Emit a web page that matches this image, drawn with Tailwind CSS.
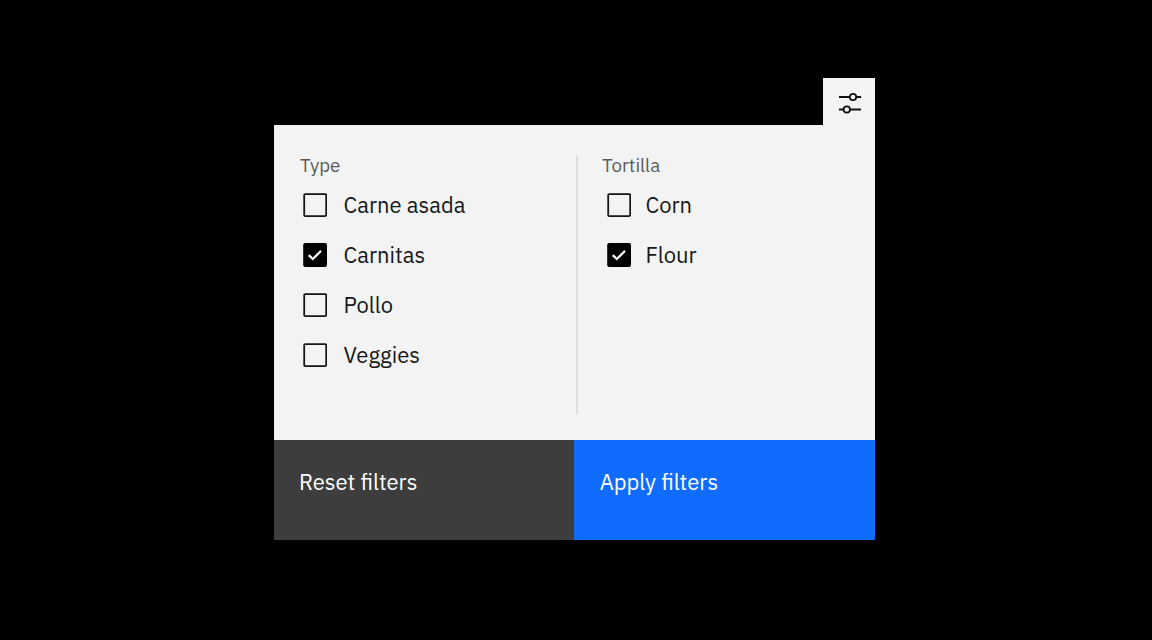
<!DOCTYPE html>
<html lang="en">
<head>
<meta charset="utf-8">
<title>Filters</title>
<script src="https://cdn.jsdelivr.net/npm/@tailwindcss/browser@4"></script>
</head>
<body class="h-screen overflow-hidden bg-black pt-[78px] pl-[274px] font-['IBM_Plex_Sans','Open_Sans',sans-serif] text-[22px] text-[#161616]">
<svg class="hidden">
  <symbol id="box" viewBox="0 0 24 24"><rect x="1.2" y="1.1" width="22" height="22" rx="1" fill="none" stroke="#161616" stroke-width="1.8"/></symbol>
  <symbol id="checked" viewBox="0 0 24 24"><rect x=".2" y=".1" width="23.8" height="23.8" rx="1.8" fill="#000"/><path d="M5.8 12.1l4 3.9 8.2-8.1" fill="none" stroke="#fff" stroke-width="2.2"/></symbol>
</svg>
<main class="flex w-[601px] flex-col">
  <button class="flex h-[47px] w-[52px] items-center justify-center self-end bg-[#f3f3f3] pt-[3px] pl-[2px]" aria-label="Filter settings">
    <svg class="h-[24px] w-[24px]" viewBox="0 0 24 24" fill="none" stroke="#111" stroke-width="1.8"><path d="M1 6h10.8M18.2 6H23M1 18.5h4.7M12 18.5h11"/><circle cx="15" cy="6" r="3.2"/><circle cx="8.8" cy="18.5" r="3.2"/></svg>
  </button>
  <section class="flex h-[314.5px] bg-[#f3f3f3] pt-[30px]">
    <fieldset class="h-[259px] w-[304px] border-r-2 border-[#dedede] pl-[26px]">
      <h2 class="h-[25px] text-[18.7px] leading-[20px] text-[#5a5a5a]">Type</h2>
      <ul class="pl-[3.4px]">
        <li class="flex h-[50px] items-center gap-[16.2px]"><svg class="size-6"><use href="#box"/></svg><span class="pb-[2px]">Carne asada</span></li>
        <li class="flex h-[50px] items-center gap-[16.2px]"><svg class="size-6"><use href="#checked"/></svg><span class="pb-[2px]">Carnitas</span></li>
        <li class="flex h-[50px] items-center gap-[16.2px]"><svg class="size-6"><use href="#box"/></svg><span class="pb-[2px]">Pollo</span></li>
        <li class="flex h-[50px] items-center gap-[16.2px]"><svg class="size-6"><use href="#box"/></svg><span class="pb-[2px]">Veggies</span></li>
      </ul>
    </fieldset>
    <fieldset class="pl-[24px]">
      <h2 class="h-[25px] text-[18.7px] leading-[20px] text-[#5a5a5a]">Tortilla</h2>
      <ul class="pl-[5px]">
        <li class="flex h-[50px] items-center gap-[14.5px]"><svg class="size-6"><use href="#box"/></svg><span class="pb-[2px]">Corn</span></li>
        <li class="flex h-[50px] items-center gap-[14.5px]"><svg class="size-6"><use href="#checked"/></svg><span class="pb-[2px]">Flour</span></li>
      </ul>
    </fieldset>
  </section>
  <footer class="flex h-[100px] text-white">
    <button class="flex w-[300.4px] items-start bg-[#3d3d3d] pt-[27px] pl-[25px] leading-[30px]">Reset filters</button>
    <button class="flex flex-1 items-start bg-[#0f6cff] pt-[27px] pl-[25.3px] leading-[30px]">Apply filters</button>
  </footer>
</main>
</body>
</html>
